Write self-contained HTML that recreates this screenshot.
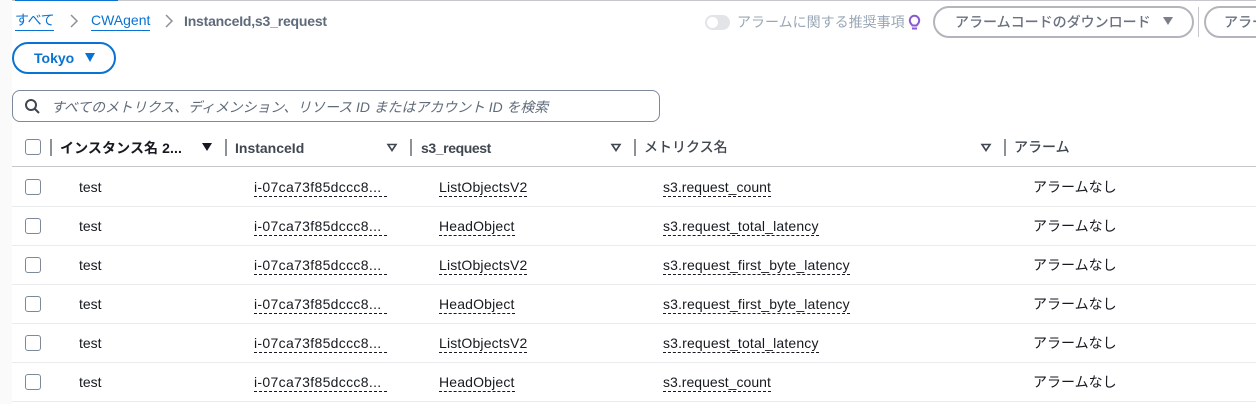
<!DOCTYPE html>
<html lang="ja">
<head>
<meta charset="utf-8">
<style>
html,body{margin:0;padding:0;width:1256px;height:404px;overflow:hidden;background:#fff}
body{position:relative;font-family:"Liberation Sans","Noto Sans CJK JP",sans-serif;font-size:14px;color:#16191f}
.t,.b,.s{position:absolute;white-space:nowrap}
.t{line-height:20px}
.u{border-bottom:1px dashed #16191f;line-height:19px;height:18px;letter-spacing:.16px}
.id{letter-spacing:.32px;padding-right:5px}
.c{letter-spacing:.03px}
.h{font-weight:700;color:#414750}
.m{font-family:"Noto Sans CJK JP",sans-serif;font-weight:500;color:#414750}
.cb{position:absolute;left:25px;width:14px;height:14px;border:1px solid #7d8998;border-radius:3px;background:#fff}
.line{position:absolute;left:12px;right:0;height:1px;background:#e9ebed}
.sep{position:absolute;top:139px;width:2px;height:17px;background:#8d9299}
</style>
</head>
<body>
<div class="b" style="left:0;top:0;width:12px;height:404px;background:#fafafa"></div>
<div class="b" style="left:12px;top:0;right:0;height:1px;background:#c6c6cd"></div>
<div class="b" style="left:15px;top:0;width:103px;height:1px;background:#0972d3"></div>

<span class="t" style="left:15px;top:10px;color:#0972d3;border-bottom:1px solid #0972d3;height:20px;letter-spacing:-.4px">すべて</span>
<svg class="s" style="left:69px;top:14px" width="10" height="14" viewBox="0 0 10 14"><path d="M2 1l6 6-6 6" fill="none" stroke="#8d9299" stroke-width="1.500"/></svg>
<span class="t" style="left:91px;top:11px;color:#0972d3;border-bottom:1px solid #0972d3;height:19px;line-height:19px">CWAgent</span>
<svg class="s" style="left:164px;top:14px" width="10" height="14" viewBox="0 0 10 14"><path d="M2 1l6 6-6 6" fill="none" stroke="#8d9299" stroke-width="1.500"/></svg>
<span class="t h" style="left:184px;top:11px;color:#5f6b7a;letter-spacing:-.2px">InstanceId,s3_request</span>

<div class="b" style="left:705px;top:15px;width:25px;height:15px;border-radius:8px;background:#e3e4e8"></div>
<div class="b" style="left:707px;top:17px;width:11px;height:11px;border-radius:50%;background:#fff"></div>
<span class="t" style="left:737px;top:12px;color:#9ba7b6">アラームに関する推奨事項</span>
<svg class="s" style="left:907px;top:13px" width="15" height="19" viewBox="0 0 15 19"><path d="M5.500 12.500C3.500 10.500 2.800 9.500 2.800 7.500a4.700 4.700 0 0 1 9.400 0c0 2-.7 3-2.700 5z" fill="none" stroke="#8a5ad0" stroke-width="2"/><path d="M5 15.500h5" stroke="#8a5ad0" stroke-width="2"/></svg>
<div class="b" style="left:933px;top:6px;width:257px;height:28px;border:2px solid #b4b5bc;border-radius:16px"></div>
<span class="t m" style="left:955px;top:12px;color:#6b7280">アラームコードのダウンロード</span>
<svg class="s" style="left:1162px;top:16px" width="12" height="10" viewBox="0 0 12 10"><path d="M1 1h10L6 9z" fill="#7b7f87"/></svg>
<div class="b" style="left:1198px;top:7px;width:1px;height:30px;background:#c6c6cd"></div>
<div class="b" style="left:1204px;top:6px;width:80px;height:28px;border:2px solid #b4b5bc;border-radius:16px"></div>
<span class="t m" style="left:1224px;top:12px;color:#6b7280">アラー</span>

<div class="b" style="left:12px;top:42px;width:100px;height:28px;border:2px solid #0972d3;border-radius:16px"></div>
<span class="t h" style="left:34px;top:48px;color:#0972d3">Tokyo</span>
<svg class="s" style="left:84px;top:53px" width="12" height="10" viewBox="0 0 12 10"><path d="M1 0h10L6 9z" fill="#0972d3"/></svg>

<div class="b" style="left:12px;top:90px;width:646px;height:30px;border:1px solid #7d8998;border-radius:8px"></div>
<svg class="s" style="left:24px;top:98px" width="16" height="16" viewBox="0 0 16 16"><circle cx="7" cy="7" r="5" fill="none" stroke="#414750" stroke-width="2"/><path d="M10.500 10.500L15 15" stroke="#414750" stroke-width="2"/></svg>
<span class="t" style="left:51px;top:97px;color:#5f6b7a;font-style:italic;font-size:13.900px">すべてのメトリクス、ディメンション、リソース ID またはアカウント ID を検索</span>

<div class="cb" style="top:139px"></div>
<div class="sep" style="left:50px"></div>
<span class="t h" style="left:60px;top:138px;color:#16191f;letter-spacing:.1px">インスタンス名 2...</span>
<svg class="s" style="left:201px;top:143px" width="12" height="10" viewBox="0 0 12 10"><path d="M1 0h10L6 8z" fill="#16191f"/></svg>
<div class="sep" style="left:225px"></div>
<span class="t h" style="left:235px;top:138px">InstanceId</span>
<svg class="s" style="left:386px;top:143px" width="12" height="10" viewBox="0 0 12 10"><path d="M2 1.500h8L6 7.500z" fill="none" stroke="#414750" stroke-width="1.600"/></svg>
<div class="sep" style="left:410px"></div>
<span class="t h" style="left:421px;top:138px;letter-spacing:-.4px">s3_request</span>
<svg class="s" style="left:610px;top:143px" width="12" height="10" viewBox="0 0 12 10"><path d="M2 1.500h8L6 7.500z" fill="none" stroke="#414750" stroke-width="1.600"/></svg>
<div class="sep" style="left:634px"></div>
<span class="t m" style="left:644px;top:137px">メトリクス名</span>
<svg class="s" style="left:980px;top:143px" width="12" height="10" viewBox="0 0 12 10"><path d="M2 1.500h8L6 7.500z" fill="none" stroke="#414750" stroke-width="1.600"/></svg>
<div class="sep" style="left:1004px"></div>
<span class="t m" style="left:1014px;top:137px">アラーム</span>
<div class="line" style="top:166px;background:#c6c6cd"></div>

<div class="cb" style="top:179px"></div>
<span class="t" style="left:79px;top:177px">test</span>
<span class="t u id" style="left:254px;top:178px">i-07ca73f85dccc8...</span>
<span class="t u" style="left:439px;top:178px">ListObjectsV2</span>
<span class="t u c" style="left:663px;top:178px">s3.request_count</span>
<span class="t" style="left:1033px;top:177px">アラームなし</span>
<div class="line" style="top:206px"></div>

<div class="cb" style="top:218px"></div>
<span class="t" style="left:79px;top:216px">test</span>
<span class="t u id" style="left:254px;top:217px">i-07ca73f85dccc8...</span>
<span class="t u" style="left:439px;top:217px">HeadObject</span>
<span class="t u" style="left:663px;top:217px">s3.request_total_latency</span>
<span class="t" style="left:1033px;top:216px">アラームなし</span>
<div class="line" style="top:245px"></div>

<div class="cb" style="top:257px"></div>
<span class="t" style="left:79px;top:255px">test</span>
<span class="t u id" style="left:254px;top:256px">i-07ca73f85dccc8...</span>
<span class="t u" style="left:439px;top:256px">ListObjectsV2</span>
<span class="t u" style="left:663px;top:256px">s3.request_first_byte_latency</span>
<span class="t" style="left:1033px;top:255px">アラームなし</span>
<div class="line" style="top:284px"></div>

<div class="cb" style="top:296px"></div>
<span class="t" style="left:79px;top:294px">test</span>
<span class="t u id" style="left:254px;top:295px">i-07ca73f85dccc8...</span>
<span class="t u" style="left:439px;top:295px">HeadObject</span>
<span class="t u" style="left:663px;top:295px">s3.request_first_byte_latency</span>
<span class="t" style="left:1033px;top:294px">アラームなし</span>
<div class="line" style="top:323px"></div>

<div class="cb" style="top:335px"></div>
<span class="t" style="left:79px;top:333px">test</span>
<span class="t u id" style="left:254px;top:334px">i-07ca73f85dccc8...</span>
<span class="t u" style="left:439px;top:334px">ListObjectsV2</span>
<span class="t u" style="left:663px;top:334px">s3.request_total_latency</span>
<span class="t" style="left:1033px;top:333px">アラームなし</span>
<div class="line" style="top:362px"></div>

<div class="cb" style="top:374px"></div>
<span class="t" style="left:79px;top:372px">test</span>
<span class="t u id" style="left:254px;top:373px">i-07ca73f85dccc8...</span>
<span class="t u" style="left:439px;top:373px">HeadObject</span>
<span class="t u c" style="left:663px;top:373px">s3.request_count</span>
<span class="t" style="left:1033px;top:372px">アラームなし</span>
<div class="line" style="top:401px"></div>
</body>
</html>
